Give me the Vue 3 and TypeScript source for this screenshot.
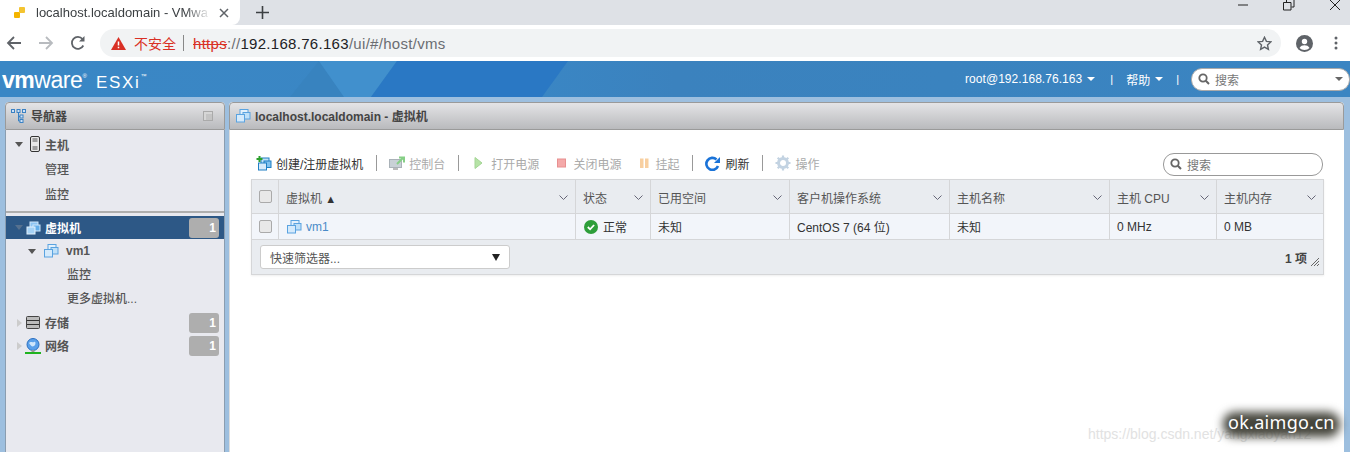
<script setup lang="ts">
interface Col { label: string; value: string }
const cols: Col[] = [
  { label: '状态', value: '正常' },
  { label: '已用空间', value: '未知' },
  { label: '客户机操作系统', value: 'CentOS 7 (64 位)' },
  { label: '主机名称', value: '未知' },
  { label: '主机 CPU', value: '0 MHz' },
  { label: '主机内存', value: '0 MB' },
]
</script>

<template>
  <div class="page">
    <div class="tabstrip">
      <div class="tab">
        <svg class="favicon" width="12" height="12" viewBox="0 0 12 12"><rect x="0" y="5" width="6" height="6" rx="1" fill="#f4b400"/><rect x="5" y="0" width="6" height="6" rx="1" fill="#f4c430"/></svg>
        <span class="tabtitle">localhost.localdomain - VMwa</span>
        <svg width="10" height="10" viewBox="0 0 10 10"><path d="M1 1l8 8M9 1l-8 8" stroke="#5f6368" stroke-width="1.5"/></svg>
      </div>
      <svg class="newtab" width="13" height="13" viewBox="0 0 13 13"><path d="M6.5 0v13M0 6.5h13" stroke="#3c4043" stroke-width="1.6"/></svg>
      <div class="winbtns">
        <svg width="12" height="12" viewBox="0 0 12 12"><path d="M1 6h10" stroke="#222" stroke-width="1"/></svg>
        <svg width="12" height="12" viewBox="0 0 12 12"><path d="M.5 3.5h7.5v7.5H.5zM3.5 3V.5H11v7.5H8.500" fill="none" stroke="#222"/></svg>
        <svg width="12" height="12" viewBox="0 0 12 12"><path d="M1 1l10 10M11 1L1 11" stroke="#222"/></svg>
      </div>
    </div>
    <div class="toolbar">
      <svg width="16" height="16" viewBox="0 0 16 16"><path d="M15 8H2M8 2L2 8l6 6" fill="none" stroke="#5f6368" stroke-width="1.8"/></svg>
      <svg class="fwd" width="16" height="16" viewBox="0 0 16 16"><path d="M1 8h13M8 2l6 6-6 6" fill="none" stroke="#b8bbbf" stroke-width="1.8"/></svg>
      <svg class="reload" width="16" height="16" viewBox="0 0 16 16"><path d="M13.300 10.500A6 6 0 1 1 12.500 4" fill="none" stroke="#5f6368" stroke-width="1.8"/><path d="M14.500 1v5.500H9z" fill="#5f6368"/></svg>
      <div class="omni">
        <svg width="15" height="13" viewBox="0 0 15 13"><path d="M7.500 0L15 13H0z" fill="#d93025"/><path d="M7.500 4.500v4M7.500 9.700v1.500" stroke="#fff" stroke-width="1.500"/></svg>
        <span class="insecure">不安全</span>
        <span class="omnisep"></span>
        <span class="url"><s class="https">https</s><span class="dim">://</span>192.168.76.163<span class="dim">/ui/#/host/vms</span></span>
        <svg class="star" width="15" height="15" viewBox="0 0 15 15"><path d="M7.500 1.300l1.900 4.100 4.400.5-3.300 3 .9 4.400-3.900-2.200-3.900 2.200.9-4.400-3.300-3 4.400-.5z" fill="none" stroke="#5f6368" stroke-width="1.400"/></svg>
      </div>
      <svg class="avatar" width="17" height="17" viewBox="0 0 17 17"><circle cx="8.500" cy="8.500" r="8.500" fill="#5f6368"/><circle cx="8.500" cy="6.500" r="2.700" fill="#fff"/><path d="M3.500 13c1-2 3-2.700 5-2.700s4 .7 5 2.700c-1.300 1.300-3 2-5 2s-3.700-.7-5-2z" fill="#fff"/></svg>
      <svg class="menu" width="4" height="14" viewBox="0 0 4 14"><circle cx="2" cy="2" r="1.500" fill="#5f6368"/><circle cx="2" cy="7" r="1.500" fill="#5f6368"/><circle cx="2" cy="12" r="1.500" fill="#5f6368"/></svg>
    </div>

    <header class="apphead">
      <svg class="facets" width="1350" height="36" viewBox="0 0 1350 36"><path d="M319 0L344 36H290z" fill="#3883bf"/><path d="M319 0H397L371 36H344z" fill="#4190cd"/><path d="M397 0H568L542 36H371z" fill="#2a78c4"/></svg>
      <div class="logo"><span class="vm">vm</span><span class="ware">ware</span><sup class="reg">®</sup><span class="esxi">ESXi</span><sup class="tm">™</sup></div>
      <div class="headright">
        <span class="who">root@192.168.76.163</span><i class="caretw"></i>
        <span class="bar bar1">|</span>
        <span>帮助</span><i class="caretw"></i>
        <span class="bar bar2">|</span>
        <div class="headsearch">
          <svg width="12" height="12" viewBox="0 0 12 12"><circle cx="5" cy="5" r="3.700" fill="none" stroke="#666" stroke-width="1.800"/><path d="M7.800 7.800L11 11" stroke="#666" stroke-width="2"/></svg>
          <span>搜索</span>
          <i class="caretg"></i>
        </div>
      </div>
    </header>

    <main class="workspace">
      <aside class="nav">
        <div class="panelhead">
          <svg class="navtree" width="16" height="14" viewBox="0 0 16 14"><g fill="#cfe2f6" stroke="#3b82c4"><rect x=".5" y=".5" width="3" height="3"/><rect x="6" y=".5" width="3" height="3"/><rect x="11.500" y=".5" width="3" height="3"/><rect x="9" y="6" width="3" height="3"/><rect x="9" y="10.500" width="3" height="3"/></g><path d="M7.500 4v8H9M7.500 7.500H9" fill="none" stroke="#3b82c4"/></svg>
          <span class="paneltitle">导航器</span>
          <svg class="collapse" width="10" height="10" viewBox="0 0 10 10"><rect x=".5" y=".5" width="9" height="9" fill="#d6d6d6" stroke="#aaa"/><rect x="3" y="3" width="6" height="6" fill="#c4c4c4"/></svg>
        </div>
        <div class="navbody">
          <div class="navsec">
            <div class="nrow top"><i class="tri down t6"></i>
              <svg class="nicon" width="12" height="16" viewBox="0 0 12 16"><rect x="1.500" y=".5" width="9" height="15" rx="1.500" fill="#e8e8e8" stroke="#333"/><path d="M3.500 3h5M3.500 5h5M3.500 11h5M3.500 13h5" stroke="#555"/></svg>
              <span>主机</span></div>
            <div class="nrow sub">管理</div>
            <div class="nrow sub">监控</div>
          </div>
          <div class="nrow sel"><i class="tri down dim t3"></i>
            <svg class="nicon" width="15" height="14" viewBox="0 0 15 14"><rect x="4" y="1" width="8" height="7" fill="#8cc4f2" stroke="#cfe6fa"/><rect x="7" y="4" width="7" height="6" fill="#63aeea" stroke="#cfe6fa"/><rect x="1" y="6" width="8" height="7" fill="#a5d2f6" stroke="#e4f2fd"/></svg>
            <span class="grow">虚拟机</span><b class="badge">1</b></div>
          <div class="nrow vmrow"><i class="tri down t8"></i>
            <svg class="nicon n7" width="15" height="14" viewBox="0 0 15 14"><rect x="4" y=".5" width="8" height="7" fill="#e3f1fc" stroke="#5aa3e0"/><rect x="7" y="3.500" width="7" height="6.500" fill="#bfe0f8" stroke="#5aa3e0"/><rect x=".5" y="5.500" width="8" height="7.500" fill="#d5eafb" stroke="#5aa3e0"/></svg>
            <span>vm1</span></div>
          <div class="nrow subsub s20">监控</div>
          <div class="nrow subsub s27">更多虚拟机...</div>
          <div class="nrow store"><i class="tri right"></i>
            <svg class="nicon n5" width="14" height="13" viewBox="0 0 14 13"><rect x=".5" y=".5" width="13" height="12" rx="1" fill="#bbb" stroke="#444"/><path d="M1 4.500h12M1 8.500h12" stroke="#333"/></svg>
            <span class="grow">存储</span><b class="badge">1</b></div>
          <div class="nrow netw"><i class="tri right t3"></i>
            <svg class="nicon" width="16" height="16" viewBox="0 0 16 16"><circle cx="8" cy="6.500" r="6" fill="#5aa0ea" stroke="#2a6fc0"/><path d="M4 5c2-2 3 0 5-1s2 3 0 4-3 0-5-3z" fill="#cfe6fb"/><rect x="6.500" y="12" width="3" height="2" fill="#999"/><rect x="0" y="14" width="16" height="2" fill="#1fb31f"/></svg>
            <span class="grow">网络</span><b class="badge">1</b></div>
        </div>
      </aside>

      <section class="content">
        <div class="panelhead chead">
          <svg width="15" height="14" viewBox="0 0 15 14"><rect x="4" y=".5" width="8" height="7" fill="#e3f1fc" stroke="#5aa3e0"/><rect x="7" y="3.500" width="7" height="6.500" fill="#bfe0f8" stroke="#5aa3e0"/><rect x=".5" y="5.500" width="8" height="7.500" fill="#d5eafb" stroke="#5aa3e0"/></svg>
          <span class="paneltitle">localhost.localdomain - 虚拟机</span>
        </div>
        <div class="contentbody">
          <div class="actions">
            <div class="btn on">
              <svg width="16" height="15" viewBox="0 0 16 15"><rect x="5" y="2" width="8" height="7" fill="#bfe0f8" stroke="#1f7fc4"/><rect x="8" y="5" width="7" height="6.500" fill="#7fc1ef" stroke="#1f7fc4"/><rect x="2.500" y="7" width="8" height="7" fill="#d5eafb" stroke="#1f7fc4"/><path d="M3.500 0v6M.5 3h6" stroke="#2ca02c" stroke-width="2"/></svg>
              创建/注册虚拟机</div>
            <span class="vsep"></span>
            <div class="btn">
              <svg width="16" height="15" viewBox="0 0 16 15"><rect x=".5" y="3.500" width="12" height="8" fill="#c9d1d6" stroke="#aab2b8"/><rect x="4" y="12" width="5" height="2" fill="#bbb"/><path d="M8 8l6-6M10 1.500h5v5" fill="none" stroke="#86cf86" stroke-width="2"/></svg>
              控制台</div>
            <span class="vsep"></span>
            <div class="btn play">
              <svg width="14" height="14" viewBox="0 0 14 14"><path d="M4 1.500l7 5.500-7 5.500z" fill="#b6e3a6" stroke="#a4d595"/></svg>
              打开电源</div>
            <div class="btn gap">
              <svg width="14" height="14" viewBox="0 0 14 14"><rect x="2.500" y="3" width="8" height="8" fill="#f4a9a9" stroke="#e89090"/></svg>
              关闭电源</div>
            <div class="btn gap">
              <svg width="14" height="14" viewBox="0 0 14 14"><rect x="3" y="2.500" width="3.500" height="9.500" fill="#f8cfa0"/><rect x="8" y="2.500" width="3.500" height="9.500" fill="#f8cfa0"/></svg>
              挂起</div>
            <span class="vsep"></span>
            <div class="btn on">
              <svg width="16" height="15" viewBox="0 0 16 15"><path d="M13 10a6 6 0 1 1-1.500-6.500" fill="none" stroke="#1a73d8" stroke-width="2.600"/><path d="M15 1v6H9z" fill="#1a73d8"/></svg>
              刷新</div>
            <span class="vsep"></span>
            <div class="btn">
              <svg width="16" height="16" viewBox="0 0 16 16"><circle cx="8" cy="8" r="4.500" fill="none" stroke="#c3d3e2" stroke-width="3"/><path d="M8 .5v3M8 12.500v3M.5 8h3M12.500 8h3M2.700 2.700l2.100 2.100M11.200 11.200l2.100 2.100M13.300 2.700l-2.100 2.100M4.800 11.200l-2.100 2.100" stroke="#c3d3e2" stroke-width="2.200"/></svg>
              操作</div>
            <div class="gridsearch">
              <svg width="12" height="12" viewBox="0 0 12 12"><circle cx="5" cy="5" r="3.700" fill="none" stroke="#666" stroke-width="1.800"/><path d="M7.800 7.800L11 11" stroke="#666" stroke-width="2"/></svg>
              <span>搜索</span>
            </div>
          </div>

          <div class="grid">
            <div class="cell hd chk"><i class="box"></i></div>
            <div class="cell hd"><span class="grow">虚拟机 <em class="sort">▲</em></span><svg class="chev" width="9" height="5" viewBox="0 0 9 5"><path d="M.5.500l4 4 4-4" fill="none" stroke="#667"/></svg></div>
            <div v-for="c in cols" :key="c.label" class="cell hd"><span class="grow">{{ c.label }}</span><svg class="chev" width="9" height="5" viewBox="0 0 9 5"><path d="M.5.500l4 4 4-4" fill="none" stroke="#667"/></svg></div>

            <div class="cell bd chk"><i class="box"></i></div>
            <div class="cell bd link">
              <svg width="15" height="14" viewBox="0 0 15 14"><rect x="4" y=".5" width="8" height="7" fill="#e3f1fc" stroke="#5aa3e0"/><rect x="7" y="3.500" width="7" height="6.500" fill="#bfe0f8" stroke="#5aa3e0"/><rect x=".5" y="5.500" width="8" height="7.500" fill="#d5eafb" stroke="#5aa3e0"/></svg>
              <span>vm1</span></div>
            <div v-for="(c, i) in cols" :key="c.value + i" class="cell bd">
              <svg v-if="i === 0" class="ok" width="14" height="14" viewBox="0 0 14 14"><circle cx="7" cy="7" r="7" fill="#2e9e3a"/><path d="M3.800 7l2.300 2.300 4-4.300" fill="none" stroke="#fff" stroke-width="1.800"/></svg>
              <span>{{ c.value }}</span>
            </div>

            <div class="foot">
              <div class="filter"><span class="grow">快速筛选器...</span><i class="caretk"></i></div>
              <b class="count">1 项</b>
              <svg class="resize" width="8" height="8" viewBox="0 0 8 8"><path d="M8 0L0 8M8 3L3 8M8 6L6 8" stroke="#666"/></svg>
            </div>
          </div>
        </div>
      </section>
    </main>

    <span class="wm1">https://blog.csdn.net/yangxiaoyan12</span>
    <span class="wm2">ok.aimgo.cn</span>
  </div>
</template>

<style>
html, body { margin: 0; padding: 0; overflow: hidden; }
</style>

<style scoped>
.page { position: relative; width: 1350px; height: 452px; overflow: hidden; display: flex; flex-direction: column; font: 12px "Liberation Sans", "Noto Sans CJK SC", sans-serif; color: #333; background: #9dbfdf; }
.tabstrip { height: 25px; background: #dee1e6; display: flex; align-items: center; flex: none; }
.tab { width: 240px; height: 25px; background: #fff; border-radius: 0 0 8px 0; display: flex; align-items: center; box-sizing: border-box; padding-left: 14px; }
.favicon { margin-right: 10px; }
.tabtitle { width: 175px; overflow: hidden; white-space: nowrap; font-size: 13px; color: #3c4043; margin-right: 8px; -webkit-mask-image: linear-gradient(90deg, #000 85%, transparent 100%); mask-image: linear-gradient(90deg, #000 85%, transparent 100%); }
.newtab { margin-left: 16px; }
.winbtns { margin-left: auto; display: flex; gap: 34px; padding: 0 9px 16px 0; }
.toolbar { height: 36px; background: #fff; display: flex; align-items: center; flex: none; padding-left: 6px; box-sizing: border-box; }
.fwd { margin-left: 16px; }
.reload { margin-left: 16px; }
.omni { margin-left: 14px; width: 1181px; height: 28px; border-radius: 14px; background: #f1f3f4; display: flex; align-items: center; padding: 0 9px 0 11px; box-sizing: border-box; }
.insecure { color: #d93025; font-size: 14px; margin-left: 8px; }
.omnisep { width: 1px; height: 16px; background: #888; margin: 0 9px 0 7px; }
.url { font-size: 15px; color: #202124; letter-spacing: .3px; }
.https { color: #d93025; }
.dim { color: #6a6d72; }
.star { margin-left: auto; }
.avatar { margin-left: 15px; }
.menu { margin-left: 21px; }

.apphead { position: relative; height: 36px; flex: none; display: flex; align-items: center; background: linear-gradient(90deg, #3a87c5 0%, #3a86c4 40%, #3b82be 50%, #3a83bf 70%, #3b85c2 100%); color: #fff; box-sizing: border-box; padding: 0 0 0 2px; }
.facets { position: absolute; left: 0; top: 0; }
.logo { position: relative; display: flex; align-items: baseline; white-space: nowrap; color: #fff; padding-top: 3px; }
.vm { font-size: 23px; font-weight: 700; letter-spacing: -.5px; }
.ware { font-size: 23px; letter-spacing: -.4px; }
.reg { font-size: 6px; align-self: flex-start; margin-top: 6px; }
.esxi { font-size: 17px; margin-left: 9px; letter-spacing: 1.700px; }
.tm { font-size: 6px; align-self: flex-start; margin-top: 6px; }
.headright { position: relative; margin-left: auto; display: flex; align-items: center; font-size: 12px; }
.who { letter-spacing: .05px; }
.caretw { width: 0; height: 0; border: 4px solid transparent; border-top: 4px solid #fff; border-bottom: 0; margin-left: 5px; }
.bar { font-size: 11px; }
.bar1 { margin: 0 13px 0 15px; }
.bar2 { margin: 0 12px 0 13px; }
.headsearch { width: 159px; height: 23px; border-radius: 11px; background: #fff; border: 1px solid #aaa; box-sizing: border-box; display: flex; align-items: center; padding: 0 6px; gap: 5px; color: #777; }
.caretg { margin-left: auto; width: 0; height: 0; border: 4px solid transparent; border-top: 4px solid #666; border-bottom: 0; }

.workspace { flex: 1; display: flex; gap: 4px; padding: 5px 6px 0 5px; min-height: 0; }
.nav { width: 220px; flex: none; background: #e8e9ef; border-radius: 4px 4px 0 0; display: flex; flex-direction: column; }
.content { flex: 1; background: #fff; border-radius: 4px 4px 0 0; display: flex; flex-direction: column; }
.panelhead { height: 28px; flex: none; box-sizing: border-box; display: flex; align-items: center; gap: 4px; padding: 0 6px 1px; background: linear-gradient(#e4e4e6, #b9babd); border: 1px solid #9a9a9a; border-radius: 4px 4px 0 0; }
.navtree { margin-left: -1px; }
.paneltitle { font-weight: 700; font-size: 12px; color: #444; }
.collapse { margin-left: auto; margin-right: 5px; }
.navbody { flex: 1; padding-top: 2px; border-left: 1px solid #8a9db0; border-right: 1px solid #8a9db0; }
.navsec { padding-bottom: 5px; border-bottom: 2px solid #aeaeae; margin-bottom: 3px; }
.nrow { display: flex; align-items: center; box-sizing: border-box; font-weight: 700; color: #555; }
.top { height: 24px; padding-left: 9px; }
.sub { height: 25px; padding-left: 39px; font-weight: 500; }
.sel { height: 23px; background: #2d5886; color: #fff; padding: 0 5px 0 9px; }
.vmrow { height: 24px; padding-left: 22px; }
.subsub { padding-left: 61px; font-weight: 500; }
.s20 { height: 20px; }
.s27 { height: 27px; padding-top: 2px; }
.store { height: 25px; padding: 0 5px 0 11px; }
.netw { height: 21px; padding: 0 5px 0 11px; }
.grow { flex: 1; }
.tri { display: block; width: 0; height: 0; border-style: solid; flex: none; margin-right: 6px; }
.tri.down { border-width: 5px 4px 0; border-color: #555 transparent transparent; }
.tri.down.dim { border-top-color: #56718f; }
.tri.right { border-width: 4px 0 4px 5px; border-color: transparent transparent transparent #ccc; margin-right: 4px; }
.tri.t3 { margin-right: 3px; }
.tri.t6 { margin-right: 6px; }
.tri.t8 { margin-right: 8px; }
.nicon { margin-right: 4px; flex: none; }
.nicon.n5 { margin-right: 5px; }
.nicon.n7 { margin-right: 7px; }
.badge { width: 30px; height: 20px; background: #aeaeae; color: #fff; border-radius: 3px; text-align: right; padding-right: 3px; box-sizing: border-box; line-height: 20px; font-size: 12px; }

.contentbody { flex: 1; padding: 0 20px 0 21px; border-left: 1px solid #ddd; }
.actions { height: 49px; display: flex; align-items: center; padding-top: 17px; box-sizing: border-box; color: #aaa; padding-left: 5px; }
.btn { display: flex; align-items: center; gap: 4px; white-space: nowrap; }
.btn.on { color: #333; }
.btn.play { gap: 6px; }
.btn.gap { margin-left: 16px; }
.vsep { width: 1px; height: 16px; background: #999; margin: 0 12px 0 13px; }
.gridsearch { margin-left: auto; width: 160px; height: 23px; margin-right: 1px; box-sizing: border-box; border: 1px solid #999; border-radius: 11px; display: flex; align-items: center; gap: 5px; padding: 0 6px; color: #777; position: relative; top: 1px; }

.grid { display: grid; grid-template-columns: 27px 297px 75px 139px 160px 160px 107px 1fr; grid-template-rows: 34px 26px 34px; border: 1px solid #d5d6d8; box-sizing: border-box; width: 1073px; box-shadow: 0 1px 2px #eee; }
.cell { display: flex; align-items: center; padding: 0 7px; border-right: 1px solid #d5d6d8; border-bottom: 1px solid #d5d6d8; box-sizing: border-box; gap: 4px; min-width: 0; white-space: nowrap; }
.cell:nth-child(8n) { border-right: 0; }
.hd { background: #e9ecf0; color: #555; padding-top: 1px; }
.bd { background: #f2f5fa; color: #333; }
.chk { justify-content: center; padding: 0; }
.box { display: block; box-sizing: border-box; width: 13px; height: 13px; border: 1px solid #aaa; border-radius: 2px; background: #e8e8e8; }
.link { color: #4a8bc8; padding-left: 8px; }
.sort { font-style: normal; font-size: 11px; color: #333; }
.chev { flex: none; }
.ok { flex: none; margin-left: 1px; margin-right: 1px; }
.foot { grid-column: 1 / -1; background: #e9ecf0; display: flex; align-items: center; padding: 0 4px 0 8px; position: relative; }
.filter { width: 250px; height: 24px; box-sizing: border-box; background: #fff; border: 1px solid #ccc; border-radius: 3px; display: flex; align-items: center; padding: 0 9px; color: #555; }
.caretk { width: 0; height: 0; border: 4px solid transparent; border-top: 7px solid #222; border-bottom: 0; }
.count { margin-left: auto; margin-right: 12px; color: #444; }
.resize { position: absolute; right: 4px; bottom: 8px; }
.wm1 { position: absolute; left: 1088px; top: 426px; font-size: 14px; color: #e2e2e2; white-space: nowrap; }
.wm2 { position: absolute; left: 1228px; top: 410px; font: 18px "Noto Sans", sans-serif; letter-spacing: .3px; color: #fff; white-space: nowrap; isolation: isolate; }
.wm2::before { content: ""; position: absolute; inset: 2px -5px -3px -5px; background: #45453c; border-radius: 12px; filter: blur(5px); z-index: -1; }
</style>
